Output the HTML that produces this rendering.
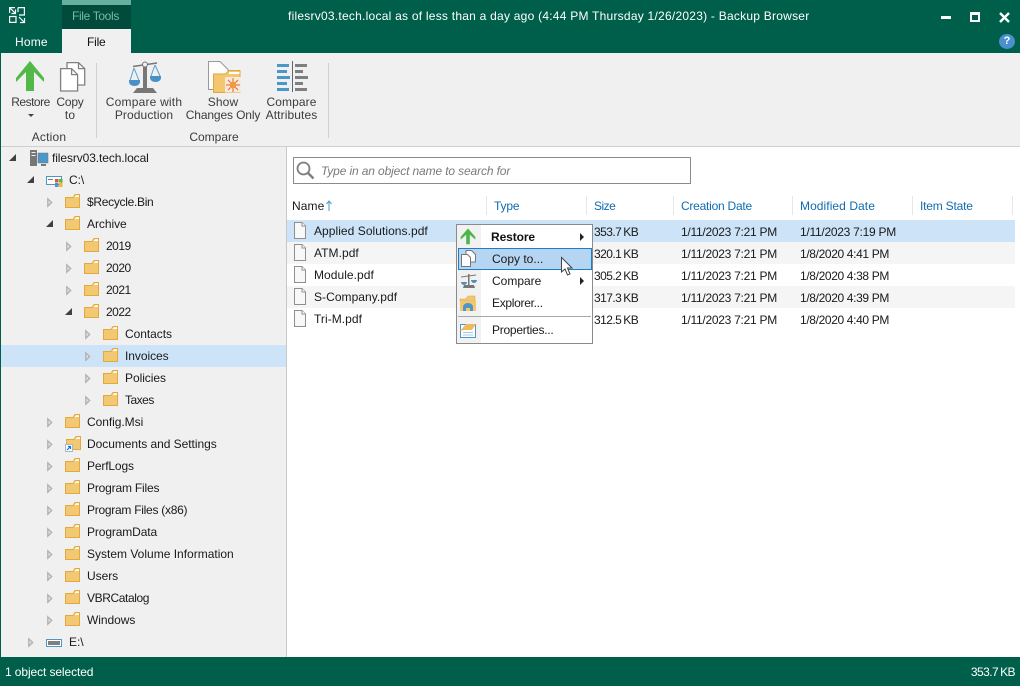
<!DOCTYPE html>
<html><head><meta charset="utf-8"><title>Backup Browser</title>
<style>
html,body{margin:0;padding:0}
body{width:1020px;height:686px;position:relative;overflow:hidden;background:#fff;font-family:"Liberation Sans",sans-serif;font-size:12px;color:#1a1a1a}
.a{position:absolute}
.t{position:absolute;white-space:nowrap;line-height:14px;letter-spacing:-.05px}
.c{text-align:center;transform:translateX(-50%);color:#3c3c3c;letter-spacing:.1px}
.w{color:#fff}
.h{color:#0f6cb0;letter-spacing:-.15px}
.n{letter-spacing:.05px}
.s{letter-spacing:-.55px;word-spacing:-.8px}
.d{letter-spacing:-.27px}
.e{letter-spacing:-.36px}
.g{letter-spacing:-.5px}
.r{position:absolute;left:287px;width:728px;height:22px}
svg{position:absolute;overflow:visible}
</style></head><body>
<svg width="0" height="0" style="position:absolute"><defs>
<g id="f"><path d="M.5 3.500H8L10 .5h4.500v13H.5z" fill="#f3c873" stroke="#e3a93c"/><path d="M9.500 3L11 1.200h3V3z" fill="#fff"/></g>
<g id="o"><path d="M.5.500h7.500l3.500 3.500v12.500H.5z" fill="#f8f8f8" stroke="#8f8f8f"/><path d="M8 .5v3.500h3.500" fill="#fff" stroke="#8f8f8f"/></g>
<path id="x" d="M.8.800L4.700 4.500 .8 8.200z" fill="#e2e2e2" stroke="#b0b0b0" stroke-width="1.300"/>
<path id="e" d="M7 0V7H0z" fill="#404040"/>
</defs></svg>

<!-- title bar -->
<div class="a" style="left:0;top:0;width:1020px;height:53px;background:#005f4b"></div>
<svg style="left:9px;top:7px" width="17" height="17" fill="none" stroke="#fff" stroke-width="1.200"><path d="M.6 6V.6H6M1 1L6.500 6.500M6.500 2.500V6.500H2.500M9 .6H15.400V8H10M9 .6V5M.6 9V15.400H7V9.500H.6M10 10L15.500 15.500M15.500 11V15.500H11"/></svg>
<div class="a" style="left:62px;top:0;width:69px;height:29px;background:#004b3c"></div>
<div class="a" style="left:62px;top:0;width:69px;height:5px;background:#67af9e"></div>
<div class="t" style="left:72px;top:9px;color:#76b9a9;letter-spacing:-.35px">File Tools</div>
<div class="t w" style="left:15px;top:35px;letter-spacing:.2px">Home</div>
<div class="a" style="left:62px;top:29px;width:69px;height:25px;background:#f0f0f0"></div>
<div class="t" style="left:87px;top:35px;color:#111;letter-spacing:-.2px">File</div>
<div class="t w" style="left:288px;top:9px;letter-spacing:.24px">filesrv03.tech.local as of less than a day ago (4:44 PM Thursday 1/26/2023) - Backup Browser</div>
<div class="a" style="left:941px;top:16px;width:10px;height:3px;background:#fff"></div>
<div class="a" style="left:970px;top:12px;width:6px;height:5px;border:2px solid #fff;border-top-width:3px"></div>
<svg style="left:999px;top:12px" width="11" height="11"><path d="M1 1l9 9M10 1l-9 9" stroke="#fff" stroke-width="2.400"/></svg>
<div class="a" style="left:999px;top:34px;width:16px;height:15px;border-radius:50%;background:#4a90cf;color:#fff;font-weight:bold;font-size:11px;line-height:15px;text-align:center">?</div>

<!-- ribbon -->
<div class="a" style="left:1px;top:53px;width:1019px;height:93px;background:#f0f0f0;border-bottom:1px solid #cfcfcf"></div>
<div class="a" style="left:0;top:53px;width:1px;height:604px;background:#005f4b"></div>
<div class="a" style="left:96px;top:63px;width:1px;height:75px;background:#d0d0d0"></div>
<div class="a" style="left:328px;top:63px;width:1px;height:75px;background:#d0d0d0"></div>
<svg style="left:16px;top:61px" width="29" height="30"><path d="M14 0L28 17V21L18 11V30H10V11L0 21V17z" fill="#52b848"/></svg>
<svg style="left:60px;top:62px" width="26" height="30" fill="#fff" stroke="#808080" stroke-width="1.300"><path d="M7 .6h11.500l6.200 6V23H7z"/><path d="M18.500.6v6h6.200" fill="none"/><path d="M.6 6.600h11l6 6V29H.6z"/><path d="M11.600 6.600v6h6" fill="none"/></svg>
<div class="t c" style="left:30.500px;top:95px;letter-spacing:-.5px">Restore</div>
<svg style="left:28px;top:114px" width="7" height="4"><path d="M0 0h6L3 3z" fill="#444"/></svg>
<div class="t c" style="left:70px;top:95px;letter-spacing:-.2px">Copy</div>
<div class="t c" style="left:70px;top:108px">to</div>
<div class="t c" style="left:49px;top:130px;letter-spacing:.2px">Action</div>
<svg style="left:129px;top:61px" width="33" height="33"><path d="M14 5h4v22h-4z" fill="#777"/><path d="M8 27h16l4 5H4z" fill="#777"/><path d="M4 5.500L28 2" stroke="#777" stroke-width="1.600"/><path d="M5 7L1.200 19M5 7L9.800 19M26 4L22 15M26 4L31 15" fill="none" stroke="#5a9fd0" stroke-width="1"/><circle cx="16" cy="3.500" r="2.500" fill="#eee" stroke="#777"/><path d="M0 19h11v2a5.500 4 0 0 1-11 0zM21 15h11v2a5.500 4 0 0 1-11 0z" fill="#4a90c4"/></svg>
<div class="t c" style="left:144px;top:95px;letter-spacing:.2px">Compare with</div>
<div class="t c" style="left:144px;top:108px">Production</div>
<svg style="left:208px;top:61px" width="33" height="33"><path d="M.5.500h11.500l8 8v20H.5z" fill="#fdfdfd" stroke="#999"/><path d="M5.500 13h12l3.500-3.500H32v22H5.500z" fill="#f2c770" stroke="#dfa83f"/><path d="M21 11h10.500v2H21z" fill="#fff"/><rect x="17" y="16" width="15.500" height="15.500" fill="#f7e8d8"/><path d="M25 17v14M18 24h14M20 19l10 10M30 19l-10 10" stroke="#e0623a"/><rect x="22" y="21" width="6" height="6" fill="#f09a3c"/></svg>
<div class="t c" style="left:223px;top:95px">Show</div>
<div class="t c" style="left:223px;top:108px;letter-spacing:-.13px">Changes Only</div>
<svg style="left:277px;top:61px" width="32" height="32"><path d="M0 3h12v3H0zM0 9h10v3H0zM0 15h13v3H0zM0 21h10v3H0zM0 27h12v3H0z" fill="#4a98c9"/><path d="M15 0h1v31h-1z" fill="#666"/><path d="M18 3h12v3H18zM18 9h8v3h-8zM18 15h13v3H18zM18 21h8v3h-8zM18 27h12v3H18z" fill="#7f7f7f"/></svg>
<div class="t c" style="left:291.500px;top:95px">Compare</div>
<div class="t c" style="left:291.500px;top:108px">Attributes</div>
<div class="t c" style="left:214px;top:130px;letter-spacing:0">Compare</div>

<!-- tree -->
<div class="a" style="left:1px;top:147px;width:285px;height:510px;background:#f0f0f0"></div>
<div class="a" style="left:286px;top:147px;width:1px;height:510px;background:#c8c8c8"></div>
<div class="a" style="left:1px;top:345px;width:285px;height:22px;background:#cde4f8"></div>

<svg style="left:9px;top:154px" width="8" height="8"><use href="#e"/></svg>
<svg style="left:30px;top:150px" width="18" height="17"><path d="M0 0h7v16H0z" fill="#777"/><path d="M1.500 2h4v1h-4zM1.500 5h4v1h-4z" fill="#eee"/><path d="M8 3h10v10H8z" fill="#4a98c9" stroke="#777" stroke-width=".6"/><path d="M11 14h5v2h-5z" fill="#777"/></svg>
<div class="t" style="left:52px;top:151px;letter-spacing:-.1px">filesrv03.tech.local</div>

<svg style="left:27px;top:176px" width="8" height="8"><use href="#e"/></svg>
<svg style="left:46px;top:176px" width="17" height="13"><path d="M.5.500h15v8H.5z" fill="#fff" stroke="#4a98c9"/><path d="M2 3h5v1H2z" fill="#777"/><path d="M9 3h3.500v3.500H9z" fill="#e0553a"/><path d="M13 3h3.500v3.500H13z" fill="#66b33d"/><path d="M9 7h3.500v4H9z" fill="#4a98c9"/><path d="M13 7h3.500v4H13z" fill="#f5b82e"/></svg>
<div class="t" style="left:69px;top:173px">C:\</div>

<svg style="left:47px;top:198px" width="6" height="10"><use href="#x"/></svg>
<svg style="left:65px;top:194px" width="15" height="14"><use href="#f"/></svg>
<div class="t" style="left:87px;top:195px;letter-spacing:-.3px">$Recycle.Bin</div>
<svg style="left:46px;top:220px" width="8" height="8"><use href="#e"/></svg>
<svg style="left:65px;top:216px" width="15" height="14"><use href="#f"/></svg>
<div class="t" style="left:87px;top:217px">Archive</div>

<svg style="left:66px;top:242px" width="6" height="10"><use href="#x"/></svg>
<svg style="left:84px;top:238px" width="15" height="14"><use href="#f"/></svg>
<div class="t g" style="left:106px;top:239px">2019</div>
<svg style="left:66px;top:264px" width="6" height="10"><use href="#x"/></svg>
<svg style="left:84px;top:260px" width="15" height="14"><use href="#f"/></svg>
<div class="t g" style="left:106px;top:261px">2020</div>
<svg style="left:66px;top:286px" width="6" height="10"><use href="#x"/></svg>
<svg style="left:84px;top:282px" width="15" height="14"><use href="#f"/></svg>
<div class="t g" style="left:106px;top:283px">2021</div>
<svg style="left:65px;top:308px" width="8" height="8"><use href="#e"/></svg>
<svg style="left:84px;top:304px" width="15" height="14"><use href="#f"/></svg>
<div class="t g" style="left:106px;top:305px">2022</div>

<svg style="left:85px;top:330px" width="6" height="10"><use href="#x"/></svg>
<svg style="left:103px;top:326px" width="15" height="14"><use href="#f"/></svg>
<div class="t" style="left:125px;top:327px">Contacts</div>
<svg style="left:85px;top:352px" width="6" height="10"><use href="#x"/></svg>
<svg style="left:103px;top:348px" width="15" height="14"><use href="#f"/></svg>
<div class="t" style="left:125px;top:349px">Invoices</div>
<svg style="left:85px;top:374px" width="6" height="10"><use href="#x"/></svg>
<svg style="left:103px;top:370px" width="15" height="14"><use href="#f"/></svg>
<div class="t" style="left:125px;top:371px">Policies</div>
<svg style="left:85px;top:396px" width="6" height="10"><use href="#x"/></svg>
<svg style="left:103px;top:392px" width="15" height="14"><use href="#f"/></svg>
<div class="t" style="left:125px;top:393px;letter-spacing:-.5px">Taxes</div>

<svg style="left:47px;top:418px" width="6" height="10"><use href="#x"/></svg>
<svg style="left:65px;top:414px" width="15" height="14"><use href="#f"/></svg>
<div class="t" style="left:87px;top:415px">Config.Msi</div>
<svg style="left:47px;top:440px" width="6" height="10"><use href="#x"/></svg>
<svg style="left:66px;top:436px" width="15" height="14"><use href="#f"/></svg>
<svg style="left:65px;top:444px" width="8" height="8"><path d="M.5.500h7v7h-7z" fill="#fff" stroke="#a8b8c8"/><path d="M2 6l3-3M3 2.500h2.500V5" stroke="#0f78d0" stroke-width="1.200" fill="none"/></svg>
<div class="t" style="left:87px;top:437px">Documents and Settings</div>
<svg style="left:47px;top:462px" width="6" height="10"><use href="#x"/></svg>
<svg style="left:65px;top:458px" width="15" height="14"><use href="#f"/></svg>
<div class="t" style="left:87px;top:459px;letter-spacing:-.15px">PerfLogs</div>
<svg style="left:47px;top:484px" width="6" height="10"><use href="#x"/></svg>
<svg style="left:65px;top:480px" width="15" height="14"><use href="#f"/></svg>
<div class="t" style="left:87px;top:481px;letter-spacing:-.18px">Program Files</div>
<svg style="left:47px;top:506px" width="6" height="10"><use href="#x"/></svg>
<svg style="left:65px;top:502px" width="15" height="14"><use href="#f"/></svg>
<div class="t" style="left:87px;top:503px;letter-spacing:-.27px">Program Files (x86)</div>
<svg style="left:47px;top:528px" width="6" height="10"><use href="#x"/></svg>
<svg style="left:65px;top:524px" width="15" height="14"><use href="#f"/></svg>
<div class="t" style="left:87px;top:525px;letter-spacing:-.12px">ProgramData</div>
<svg style="left:47px;top:550px" width="6" height="10"><use href="#x"/></svg>
<svg style="left:65px;top:546px" width="15" height="14"><use href="#f"/></svg>
<div class="t" style="left:87px;top:547px;letter-spacing:0">System Volume Information</div>
<svg style="left:47px;top:572px" width="6" height="10"><use href="#x"/></svg>
<svg style="left:65px;top:568px" width="15" height="14"><use href="#f"/></svg>
<div class="t" style="left:87px;top:569px">Users</div>
<svg style="left:47px;top:594px" width="6" height="10"><use href="#x"/></svg>
<svg style="left:65px;top:590px" width="15" height="14"><use href="#f"/></svg>
<div class="t" style="left:87px;top:591px;letter-spacing:-.4px">VBRCatalog</div>
<svg style="left:47px;top:616px" width="6" height="10"><use href="#x"/></svg>
<svg style="left:65px;top:612px" width="15" height="14"><use href="#f"/></svg>
<div class="t" style="left:87px;top:613px">Windows</div>
<svg style="left:28px;top:638px" width="6" height="10"><use href="#x"/></svg>
<div class="a" style="left:46px;top:639px;width:14px;height:6px;border:1px solid #4a98c9;background:#fff"></div>
<div class="a" style="left:48px;top:641px;width:12px;height:4px;background:#7f7f7f"></div>
<div class="t" style="left:69px;top:635px">E:\</div>

<!-- search -->
<div class="a" style="left:293px;top:157px;width:396px;height:25px;border:1px solid #8a8a8a;background:#fff"></div>
<svg style="left:296px;top:161px" width="20" height="20" fill="none" stroke="#7f7f7f"><circle cx="7.500" cy="7.500" r="6" stroke-width="1.800"/><path d="M12 12l5.500 5.500" stroke-width="2.400"/></svg>
<div class="t" style="left:321px;top:164px;font-style:italic;color:#7a7a7a;letter-spacing:-.13px">Type in an object name to search for</div>

<!-- headers -->
<div class="t" style="left:292px;top:199px;letter-spacing:.1px">Name</div>
<svg style="left:325px;top:200px" width="8" height="12"><path d="M4 1v10M1.500 4L4 1l2.500 3" fill="none" stroke="#4a98c9"/></svg>
<div class="a" style="left:486px;top:196px;width:1px;height:19px;background:#e6e6e6"></div>
<div class="a" style="left:586px;top:196px;width:1px;height:19px;background:#e6e6e6"></div>
<div class="a" style="left:673px;top:196px;width:1px;height:19px;background:#e6e6e6"></div>
<div class="a" style="left:792px;top:196px;width:1px;height:19px;background:#e6e6e6"></div>
<div class="a" style="left:912px;top:196px;width:1px;height:19px;background:#e6e6e6"></div>
<div class="a" style="left:1012px;top:196px;width:1px;height:19px;background:#e6e6e6"></div>
<div class="t h" style="left:494px;top:199px">Type</div>
<div class="t h" style="left:594px;top:199px;letter-spacing:-.5px">Size</div>
<div class="t h" style="left:681px;top:199px;letter-spacing:-.24px">Creation Date</div>
<div class="t h" style="left:800px;top:199px;letter-spacing:.07px">Modified Date</div>
<div class="t h" style="left:920px;top:199px;letter-spacing:-.2px">Item State</div>

<!-- rows -->
<div class="r" style="top:220px;background:#cde4f8"></div>
<div class="r" style="top:242px;background:#f5f5f5"></div>
<div class="r" style="top:286px;background:#f5f5f5"></div>
<svg style="left:294px;top:222px" width="12" height="17"><use href="#o"/></svg>
<svg style="left:294px;top:244px" width="12" height="17"><use href="#o"/></svg>
<svg style="left:294px;top:266px" width="12" height="17"><use href="#o"/></svg>
<svg style="left:294px;top:288px" width="12" height="17"><use href="#o"/></svg>
<svg style="left:294px;top:310px" width="12" height="17"><use href="#o"/></svg>
<div class="t n" style="left:314px;top:224px">Applied Solutions.pdf</div>
<div class="t n" style="left:314px;top:246px">ATM.pdf</div>
<div class="t n" style="left:314px;top:268px">Module.pdf</div>
<div class="t n" style="left:314px;top:290px">S-Company.pdf</div>
<div class="t n" style="left:314px;top:312px">Tri-M.pdf</div>
<div class="t s" style="left:594px;top:225px">353.7 KB</div>
<div class="t s" style="left:594px;top:247px">320.1 KB</div>
<div class="t s" style="left:594px;top:269px">305.2 KB</div>
<div class="t s" style="left:594px;top:291px">317.3 KB</div>
<div class="t s" style="left:594px;top:313px">312.5 KB</div>
<div class="t d" style="left:681px;top:225px">1/11/2023 7:21 PM</div>
<div class="t d" style="left:681px;top:247px">1/11/2023 7:21 PM</div>
<div class="t d" style="left:681px;top:269px">1/11/2023 7:21 PM</div>
<div class="t d" style="left:681px;top:291px">1/11/2023 7:21 PM</div>
<div class="t d" style="left:681px;top:313px">1/11/2023 7:21 PM</div>
<div class="t d" style="left:800px;top:225px">1/11/2023 7:19 PM</div>
<div class="t e" style="left:800px;top:247px">1/8/2020 4:41 PM</div>
<div class="t e" style="left:800px;top:269px">1/8/2020 4:38 PM</div>
<div class="t e" style="left:800px;top:291px">1/8/2020 4:39 PM</div>
<div class="t e" style="left:800px;top:313px">1/8/2020 4:40 PM</div>

<!-- context menu -->
<div class="a" style="left:456px;top:224px;width:135px;height:118px;border:1px solid #8a8a8a;background:#fff"></div>
<div class="a" style="left:457px;top:225px;width:24px;height:118px;background:#f1f1f1"></div>
<div class="a" style="left:458px;top:248px;width:132px;height:20px;background:#b5d5f2;border:1px solid #1a7fc8"></div>
<div class="a" style="left:458px;top:316px;width:133px;height:1px;background:#a8a8a8"></div>
<svg style="left:461px;top:229px" width="14" height="16"><path d="M7 0l7 8v2L8.500 5V15H5.500V5L0 10V8z" fill="#4cb648" stroke="#4cb648" stroke-width=".6"/></svg>
<svg style="left:461px;top:250px" width="15" height="17" fill="#fdfdfd" stroke="#777"><path d="M5 .5h5.500l4 4V12H5z"/><path d="M.5 4.500h6l3 3v9h-9z"/></svg>
<svg style="left:460px;top:272px" width="17" height="17"><path d="M8 2h1.500v11H8z" fill="#777"/><path d="M4 13h10l1 3H3z" fill="#777"/><path d="M1 5l15-2" stroke="#777"/><path d="M1 10h6a3 3 0 0 1-6 0zM11 8h6a3 3 0 0 1-6 0z" fill="#4a90c4"/></svg>
<svg style="left:460px;top:295px" width="16" height="16"><path d="M0 4h6l2-3h7v5H0z" fill="#f2c770" stroke="#dfa83f" stroke-width=".6"/><path d="M0 6h16v10H0z" fill="#f2c770"/><path d="M3 16v-4a5 4 0 0 1 10 0v4h-3v-3H6v3z" fill="#4a98c9"/></svg>
<svg style="left:460px;top:321px" width="17" height="17"><path d="M.5 3.500h15v13H.5z" fill="#fff" stroke="#4a98c9"/><path d="M0 10l6-7h10l-4 6H4z" fill="#f2b95a"/><path d="M3 11h10v1H3zM3 13.500h10v1H3z" fill="#a8c8e0"/></svg>
<div class="t" style="left:491px;top:230px;font-weight:bold;color:#111;letter-spacing:-.1px">Restore</div>
<div class="t" style="left:492px;top:252px;letter-spacing:0">Copy to...</div>
<div class="t" style="left:492px;top:274px;letter-spacing:0">Compare</div>
<div class="t" style="left:492px;top:296px;letter-spacing:-.3px">Explorer...</div>
<div class="t" style="left:492px;top:323px;letter-spacing:-.25px">Properties...</div>
<svg style="left:580px;top:233px" width="5" height="8"><path d="M0 0l4 4-4 4z" fill="#222"/></svg>
<svg style="left:580px;top:277px" width="5" height="8"><path d="M0 0l4 4-4 4z" fill="#222"/></svg>
<svg style="left:561px;top:257px" width="13" height="19"><path d="M.5.500V15l3.500-3 2.500 6 2.500-1-2.500-6H11z" fill="#fff" stroke="#444"/></svg>

<!-- status bar -->
<div class="a" style="left:0;top:657px;width:1020px;height:29px;background:#005f4b"></div>
<div class="t w" style="left:5px;top:665px;letter-spacing:-.1px">1 object selected</div>
<div class="t w s" style="right:5px;top:665px">353.7 KB</div>
</body></html>
